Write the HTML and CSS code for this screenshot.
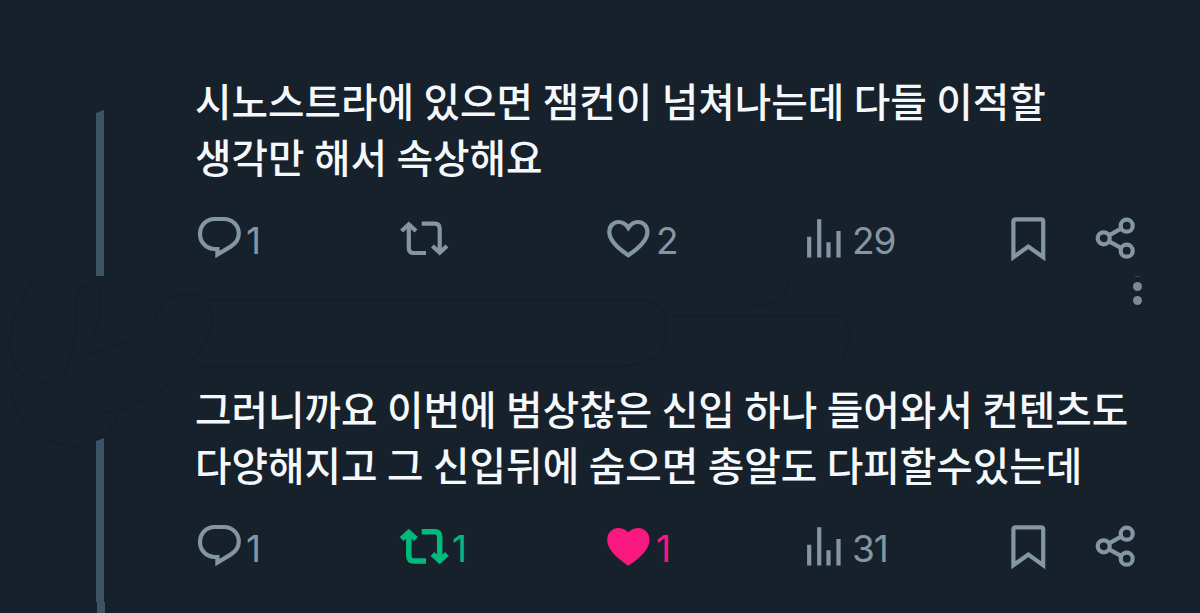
FILE: index.html
```
<!DOCTYPE html>
<html lang="ko">
<head>
    <meta charset="utf-8">
    <meta name="viewport" content="width=device-width, initial-scale=1.0">
    <title>Thread</title>
    <link rel="stylesheet" href="styles.css">
</head>
<body>
    <!-- icons shared by both tweets -->
    <svg class="defs" width="0" height="0">
        <symbol id="reply" viewBox="0 0 48 48">
            <path d="M18.5 4H28c8.3 0 14.8 6.3 14.8 14.3 0 5.7-3 10.2-8.2 13.3L21.4 39.5V34h-2.9C10.4 34 4 27.2 4 18.9S10.4 4 18.5 4z"/>
        </symbol>
        <symbol id="retweet" viewBox="0 0 52 48">
            <path d="M3.6 16l7.2-6.6L18 16M10.8 10v23c0 3.2 1.7 5 5 5H28M23.7 8.7h13c3.3 0 5 1.8 5 5V37M34.4 31l7.3 6.6L49 31"/>
        </symbol>
        <symbol id="heart" viewBox="0 0 48 48">
            <path d="M22.3 40.2C10 32 3.3 24.500 3.3 17c0-6 4.200-10 9.200-10 4 0 7.500 2.200 9.800 5.800C24.600 9.200 28 7 32 7c5.200 0 9.400 4 9.400 10 0 7.500-6.800 15-19.100 23.200z"/>
        </symbol>
        <symbol id="views" viewBox="0 0 48 48">
            <path d="M5.2 21.7v20.800M15.200 4.300v38.200M24.500 27.300v15.200M34.500 16v26.500"/>
        </symbol>
        <symbol id="bookmark" viewBox="0 0 48 48">
            <path d="M5.4 42.2V6.400q0-2 2-2h25.800q2 0 2 2v35.800L20.300 31.500z"/>
        </symbol>
        <symbol id="share" viewBox="0 0 48 48">
            <path d="M15 20.300l12.500-7M15 26.300l12.500 6.800"/>
            <circle cx="9.700" cy="23.300" r="6"/>
            <circle cx="32.700" cy="10.700" r="6"/>
            <circle cx="32.700" cy="35.700" r="6"/>
        </symbol>
    </svg>

    <!-- faint brush marks over the hidden names -->
    <svg class="smudge" viewBox="0 0 1200 613">
        <path d="M33 280C18 305 8 330 10 352c2 22 22 32 40 30 22-4 26-40 26-70s6-24 14-28M98 285c6 20 2 50-20 72 40-10 62-14 78-40 6-18 20-24 40-22 20 4 20 30 6 52-20 34-62 62-100 66M12 392c2 28 30 52 62 54 24 0 42-14 44-36"/>
        <path d="M205 300h440c22 2 24 22 20 40-6 22-20 26-50 26H195M790 280c-2 16-16 26-40 26M665 316h170c20 2 18 30 4 48"/>
    </svg>

    <div class="tweet">
        <div class="side"><div class="line"></div></div>
        <div class="content">
            <p class="text">시노스트라에 있으면 잼컨이 넘쳐나는데 다들 이적할<br>생각만 해서 속상해요</p>
            <div class="actions">
                <div class="action"><svg class="icon"><use href="#reply"/></svg><span class="count">1</span></div>
                <div class="action"><svg class="icon wide"><use href="#retweet"/></svg></div>
                <div class="action"><svg class="icon"><use href="#heart"/></svg><span class="count">2</span></div>
                <div class="action views"><svg class="icon"><use href="#views"/></svg><span class="count">29</span></div>
                <div class="action"><svg class="icon"><use href="#bookmark"/></svg></div>
                <div class="action"><svg class="icon"><use href="#share"/></svg></div>
            </div>
        </div>
    </div>

    <div class="tweet second">
        <div class="side"><div class="line"></div><div class="line-end"></div></div>
        <div class="content">
            <div class="more"><i class="cut"></i><i></i><i></i></div>
            <p class="text">그러니까요 이번에 범상찮은 신입 하나 들어와서 컨텐츠도<br>다양해지고 그 신입뒤에 숨으면 총알도 다피할수있는데</p>
            <div class="actions">
                <div class="action"><svg class="icon"><use href="#reply"/></svg><span class="count">1</span></div>
                <div class="action retweeted"><svg class="icon wide"><use href="#retweet"/></svg><span class="count">1</span></div>
                <div class="action liked"><svg class="icon"><use href="#heart"/></svg><span class="count">1</span></div>
                <div class="action views"><svg class="icon"><use href="#views"/></svg><span class="count">31</span></div>
                <div class="action"><svg class="icon"><use href="#bookmark"/></svg></div>
                <div class="action"><svg class="icon"><use href="#share"/></svg></div>
            </div>
        </div>
    </div>
</body>
</html>
```

FILE: styles.css
```
* {
    box-sizing: border-box;
}

body {
    margin: 0;
    height: 613px;
    overflow: hidden;
    background: #17212b;
    color: #f5f8fa;
    font-family: "Noto Sans CJK KR", sans-serif;
}

.defs {
    display: block;
}

.smudge {
    position: absolute;
    top: 0;
    left: 0;
    width: 1200px;
    height: 613px;
    fill: none;
    stroke: #141d26;
    stroke-width: 2px;
    opacity: 0.5;
    z-index: -1;
}

.tweet {
    display: grid;
    grid-template-columns: 195px 1fr;
    height: 276px;
}

.tweet.second {
    height: 337px;
}

/* thread line */
.side {
    display: flex;
    flex-direction: column;
    padding: 110px 0 0 96px;
}

.second .side {
    padding-top: 162px;
}

.line {
    width: 8px;
    height: 166px;
    background: #3d5466;
    clip-path: polygon(0 3px, 100% 0, 100% 100%, 0 100%);
}

.second .line {
    height: 164px;
}

.line-end {
    width: 8px;
    height: 11px;
    margin-left: 1px;
    background: #3d5466;
}

.content {
    padding-top: 72px;
}

.second .content {
    padding-top: 0;
}

.text {
    margin: 0;
    font-size: 39.7px;
    line-height: 56px;
    font-weight: 500;
    word-spacing: -1.6px;
    white-space: nowrap;
}

.more {
    display: flex;
    flex-direction: column;
    align-items: center;
    gap: 5px;
    width: 10px;
    height: 104px;
    margin-left: 937px;
}

.more i {
    width: 9px;
    height: 9px;
    border-radius: 50%;
    background: #7b8994;
}

.more .cut {
    width: 5px;
    height: 1px;
    border-radius: 0;
    background: #35414c;
}

.actions {
    display: grid;
    grid-template-columns: 202px 208px 198px 204px 86px 1fr;
    margin: 31px 0 0 1px;
    color: #8496a3;
}

.action {
    display: flex;
    gap: 2px;
    height: 48px;
}

.action.views {
    gap: 0;
}

.icon {
    width: 48px;
    height: 48px;
    flex: none;
    fill: none;
    stroke: currentColor;
    stroke-width: 4.2px;
}

.icon.wide {
    width: 52px;
}

.count {
    font-family: Inter, sans-serif;
    font-size: 37px;
    font-weight: 400;
    line-height: 52px;
    letter-spacing: -1px;
}

.retweeted {
    color: #00ba7c;
}

.retweeted .icon {
    stroke-width: 5.5px;
}

.liked {
    color: #f91880;
}

.liked .icon {
    fill: currentColor;
}
```
